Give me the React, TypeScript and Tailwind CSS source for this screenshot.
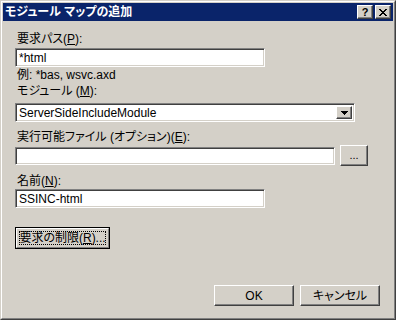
import React from "react";

const font =
  "font-['Liberation_Sans','Noto_Sans_CJK_JP',sans-serif] [font-feature-settings:'palt']";
const sunken =
  "box-border border border-t-[#808080] border-l-[#808080] border-r-white border-b-white shadow-[inset_1px_1px_0_#404040,inset_-1px_-1px_0_#d4d0c8] bg-white";
const raised =
  "box-border border border-t-white border-l-white border-r-[#404040] border-b-[#404040] shadow-[inset_-1px_-1px_0_#808080] bg-[#d4d0c8]";

function Label({ children, className = "" }: { children: React.ReactNode; className?: string }) {
  return (
    <div className={`h-[14px] leading-[14px] text-[12px] text-black pl-[2px] whitespace-nowrap ${className}`}>
      {children}
    </div>
  );
}

function CloseGlyph() {
  const rows = ["11000011", "01100110", "00111100", "00011000", "00111100", "01100110", "11000011"];
  return (
    <svg width="8" height="7" viewBox="0 0 8 7" shapeRendering="crispEdges">
      {rows.map((r, y) =>
        r.split("").map((c, x) => (c === "1" ? <rect key={`${x}-${y}`} x={x} y={y} width="1" height="1" fill="#000" /> : null))
      )}
    </svg>
  );
}

function ArrowGlyph() {
  const rows = ["1111111", "0111110", "0011100", "0001000"];
  return (
    <svg width="7" height="4" viewBox="0 0 7 4" shapeRendering="crispEdges">
      {rows.map((r, y) =>
        r.split("").map((c, x) => (c === "1" ? <rect key={`${x}-${y}`} x={x} y={y} width="1" height="1" fill="#000" /> : null))
      )}
    </svg>
  );
}

export default function App() {
  return (
    <div
      className={`w-[396px] h-[320px] box-border border border-t-[#d4d0c8] border-l-[#d4d0c8] border-r-[#404040] border-b-[#404040] ${font}`}
    >
      <div className="h-full box-border border border-t-white border-l-white border-r-[#808080] border-b-[#808080] bg-[#d4d0c8] p-px flex flex-col">
        {/* Title bar */}
        <div className="h-[18px] bg-[#0a246a] flex items-center pl-[2px] pr-[2px] shrink-0">
          <span className="flex-1 text-white font-bold text-[12px] leading-[14px] whitespace-nowrap">
            モジュール マップの追加
          </span>
          <div className={`${raised} w-[16px] h-[14px] flex items-center justify-center text-[11px] font-bold leading-none text-black`}>
            ?
          </div>
          <div className={`${raised} ml-[2px] w-[16px] h-[14px] flex items-center justify-center`}>
            <CloseGlyph />
          </div>
        </div>

        {/* Body */}
        <div className="flex flex-col flex-1 px-[12px] text-black">
          <Label className="mt-[11px]">
            要求パス(<span className="underline">P</span>):
          </Label>
          <div className={`${sunken} mt-[2px] w-[250px] h-[19px] flex items-center pl-[3px] text-[12px]`}>*html</div>
          <div className="mt-[2px] h-[13px] leading-[13px] text-[12px] pl-[2px] whitespace-nowrap">例: *bas, wsvc.axd</div>

          <Label className="mt-[2px]">
            モジュール (<span className="underline">M</span>):
          </Label>
          <div className={`${sunken} mt-[5px] w-[340px] h-[19px] flex items-stretch p-[2px]`}>
            <div className="flex-1 flex items-center pl-[1px] text-[12px] whitespace-nowrap">ServerSideIncludeModule</div>
            <div className={`${raised} w-[16px] flex items-center justify-center`}>
              <ArrowGlyph />
            </div>
          </div>

          <Label className="mt-[8px]">
            実行可能ファイル (オプション)(<span className="underline">E</span>):
          </Label>
          <div className="mt-[1px] h-[21px] flex items-center gap-[5px]">
            <div className={`${sunken} w-[320px] h-[18px]`} />
            <div className={`${raised} w-[28px] h-[21px] flex items-center justify-center text-[11px] leading-none`}>...</div>
          </div>

          <Label className="mt-[8px]">
            名前(<span className="underline">N</span>):
          </Label>
          <div className={`${sunken} mt-[1px] w-[250px] h-[19px] flex items-center pl-[3px] text-[12px]`}>SSINC-html</div>

          <div className="mt-[19px] w-[95px] h-[22px] box-border border border-black">
            <div className="h-full box-border border border-t-white border-l-white border-r-[#808080] border-b-[#808080] p-[2px]">
              <div className="h-full box-border border border-dotted border-black flex items-center justify-center text-[12px] whitespace-nowrap">
                要求の制限(<span className="underline">R</span>)...
              </div>
            </div>
          </div>

          <div className="mt-auto mb-[11px] mr-[1px] flex justify-end gap-[6px]">
            <div className={`${raised} w-[80px] h-[21px] flex items-center justify-center text-[12px]`}>OK</div>
            <div className={`${raised} w-[80px] h-[21px] flex items-center justify-center text-[12px]`}>キャンセル</div>
          </div>
        </div>
      </div>
    </div>
  );
}
